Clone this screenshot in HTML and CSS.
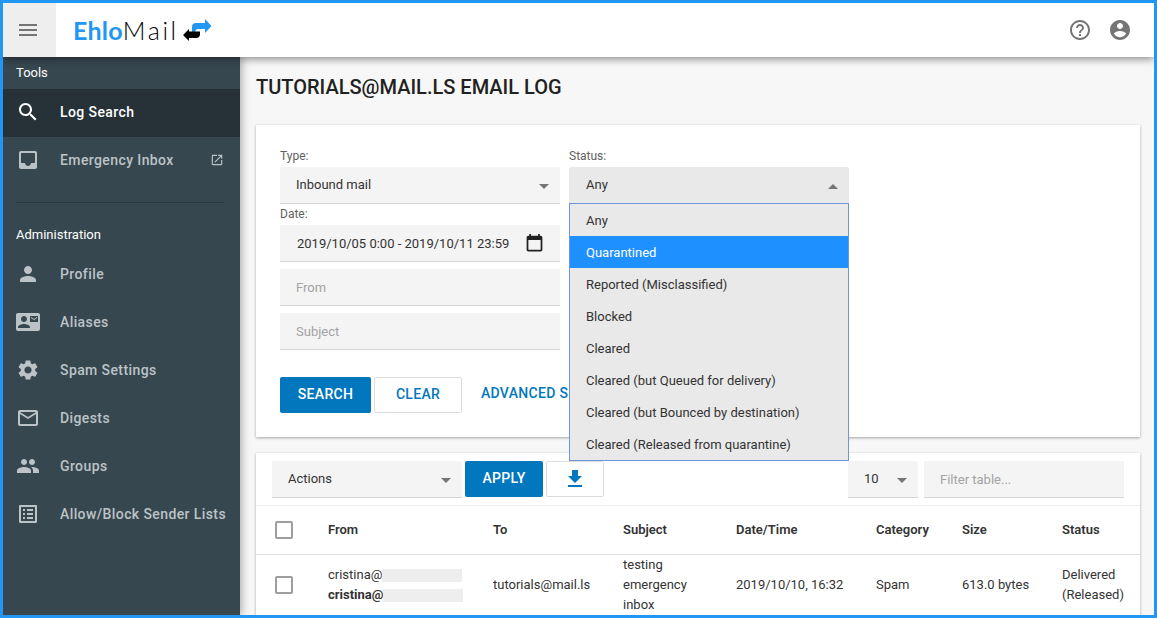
FILE: index.html
```html
<!DOCTYPE html>
<html lang="en">
<head>
  <meta charset="UTF-8" />
  <title>EhloMail - Email Log</title>
  <link rel="stylesheet" href="styles.css">
</head>
<body>
  <div class="frame">
    <header class="topbar">
      <button class="menu-btn" type="button" aria-label="Menu">
        <svg viewBox="0 0 24 24" class="icon"><path d="M3 18h18v-2H3v2zm0-5h18v-2H3v2zm0-7v2h18V6H3z"/></svg>
      </button>
      <div class="logo">
        <span class="logo-a">Ehlo</span><span class="logo-b">Mail</span>
        <svg viewBox="0 0 30 22" class="logo-arrows">
          <path fill="#2196f3" d="M10 15V8q0-4 4-4h9V0l6.500 7L23 14v-4h-7q-3 0-3 5z"/>
          <path fill="#000" d="M1 16l6-6v2.500h11V15q0 4-4 4H7v3z"/>
        </svg>
      </div>
      <div class="topbar-right">
        <svg viewBox="0 0 24 24" class="icon"><path d="M11 18h2v-2h-2v2zm1-16C6.48 2 2 6.48 2 12s4.48 10 10 10 10-4.48 10-10S17.52 2 12 2zm0 18c-4.41 0-8-3.59-8-8s3.59-8 8-8 8 3.59 8 8-3.59 8-8 8zm0-14c-2.21 0-4 1.79-4 4h2c0-1.1.9-2 2-2s2 .9 2 2c0 2-3 1.75-3 5h2c0-2.25 3-2.5 3-5 0-2.21-1.79-4-4-4z"/></svg>
        <svg viewBox="0 0 24 24" class="icon"><path d="M12 2C6.48 2 2 6.48 2 12s4.48 10 10 10 10-4.48 10-10S17.52 2 12 2zm0 3c1.66 0 3 1.34 3 3s-1.34 3-3 3-3-1.34-3-3 1.34-3 3-3zm0 14.2c-2.5 0-4.71-1.28-6-3.22.03-1.99 4-3.08 6-3.08 1.99 0 5.97 1.09 6 3.08-1.29 1.94-3.5 3.22-6 3.22z"/></svg>
      </div>
    </header>

    <div class="columns">
      <nav class="sidebar">
        <div class="nav-title tools">Tools</div>
        <a class="nav-item active">
          <svg viewBox="0 0 24 24" class="icon"><path d="M15.5 14h-.79l-.28-.27C15.41 12.59 16 11.11 16 9.5 16 5.91 13.09 3 9.5 3S3 5.91 3 9.5 5.91 16 9.5 16c1.61 0 3.09-.59 4.23-1.57l.27.28v.79l5 4.99L20.49 19l-4.99-5zm-6 0C7.01 14 5 11.99 5 9.5S7.01 5 9.5 5 14 7.01 14 9.5 11.99 14 9.5 14z"/></svg>
          Log Search
        </a>
        <a class="nav-item">
          <svg viewBox="0 0 24 24" class="icon"><path d="M19 3H4.99c-1.11 0-1.98.89-1.98 2L3 19c0 1.1.88 2 1.99 2H19c1.1 0 2-.9 2-2V5c0-1.11-.9-2-2-2zm0 12h-4c0 1.66-1.35 3-3 3s-3-1.34-3-3H4.99V5H19v10z"/></svg>
          Emergency Inbox
          <svg viewBox="0 0 24 24" class="icon small"><path d="M19 19H5V5h7V3H5c-1.11 0-2 .9-2 2v14c0 1.1.89 2 2 2h14c1.1 0 2-.9 2-2v-7h-2v7zM14 3v2h3.59l-9.83 9.83 1.41 1.41L19 6.41V10h2V3h-7z"/></svg>
        </a>
        <hr class="nav-rule">
        <div class="nav-title admin">Administration</div>
        <a class="nav-item">
          <svg viewBox="0 0 24 24" class="icon"><path d="M12 12c2.21 0 4-1.79 4-4s-1.79-4-4-4-4 1.79-4 4 1.79 4 4 4zm0 2c-2.67 0-8 1.34-8 4v2h16v-2c0-2.66-5.33-4-8-4z"/></svg>
          Profile
        </a>
        <a class="nav-item">
          <svg viewBox="0 0 24 24" class="icon"><path d="M21 8V7l-3 2-3-2v1l3 2 3-2zm1-5H2C.9 3 0 3.9 0 5v14c0 1.1.9 2 2 2h20c1.1 0 1.99-.9 1.99-2L24 5c0-1.1-.9-2-2-2zM8 6c1.66 0 3 1.34 3 3s-1.34 3-3 3-3-1.34-3-3 1.34-3 3-3zm6 12H2v-1c0-2 4-3.1 6-3.1s6 1.1 6 3.1v1zm8-6h-8V6h8v6z"/></svg>
          Aliases
        </a>
        <a class="nav-item">
          <svg viewBox="0 0 24 24" class="icon"><path d="M19.14 12.94c.04-.3.06-.61.06-.94 0-.32-.02-.64-.07-.94l2.03-1.58c.18-.14.23-.41.12-.61l-1.92-3.32c-.12-.22-.37-.29-.59-.22l-2.39.96c-.5-.38-1.03-.7-1.62-.94l-.36-2.54c-.04-.24-.24-.41-.48-.41h-3.84c-.24 0-.43.17-.47.41l-.36 2.54c-.59.24-1.13.57-1.62.94l-2.39-.96c-.22-.08-.47 0-.59.22L2.74 8.87c-.12.21-.08.47.12.61l2.03 1.58c-.05.3-.09.63-.09.94s.02.64.07.94l-2.03 1.58c-.18.14-.23.41-.12.61l1.92 3.32c.12.22.37.29.59.22l2.39-.96c.5.38 1.03.7 1.62.94l.36 2.54c.05.24.24.41.48.41h3.84c.24 0 .44-.17.47-.41l.36-2.54c.59-.24 1.13-.56 1.62-.94l2.39.96c.22.08.47 0 .59-.22l1.92-3.32c.12-.22.07-.47-.12-.61l-2.01-1.58zM12 15.6c-1.98 0-3.6-1.62-3.6-3.6s1.62-3.6 3.6-3.6 3.6 1.62 3.6 3.6-1.62 3.6-3.6 3.6z"/></svg>
          Spam Settings
        </a>
        <a class="nav-item">
          <svg viewBox="0 0 24 24" class="icon"><path d="M20 4H4c-1.1 0-1.99.9-1.99 2L2 18c0 1.1.9 2 2 2h16c1.1 0 2-.9 2-2V6c0-1.1-.9-2-2-2zm0 14H4V8l8 5 8-5v10zm-8-7L4 6h16l-8 5z"/></svg>
          Digests
        </a>
        <a class="nav-item">
          <svg viewBox="0 0 24 24" class="icon"><path d="M16 11c1.66 0 2.99-1.34 2.99-3S17.66 5 16 5c-1.66 0-3 1.34-3 3s1.34 3 3 3zm-8 0c1.66 0 2.99-1.34 2.99-3S9.66 5 8 5C6.34 5 5 6.34 5 8s1.34 3 3 3zm0 2c-2.33 0-7 1.17-7 3.5V19h14v-2.5c0-2.33-4.67-3.5-7-3.5zm8 0c-.29 0-.62.02-.97.05 1.16.84 1.97 1.97 1.97 3.45V19h6v-2.5c0-2.33-4.67-3.5-7-3.5z"/></svg>
          Groups
        </a>
        <a class="nav-item">
          <svg viewBox="0 0 24 24" class="icon"><path d="M19 5v14H5V5h14m1.1-2H3.9c-.5 0-.9.4-.9.9v16.2c0 .4.4.9.9.9h16.2c.4 0 .9-.5.9-.9V3.9c0-.5-.5-.9-.9-.9zM11 7h6v2h-6V7zm0 4h6v2h-6v-2zm0 4h6v2h-6zM7 7h2v2H7zm0 4h2v2H7zm0 4h2v2H7z"/></svg>
          Allow/Block Sender Lists
        </a>
      </nav>

      <main class="content">
        <h1 class="page-title">TUTORIALS@MAIL.LS EMAIL LOG</h1>

        <section class="card search-card">
          <div class="filters">
            <div class="filter-col">
              <label class="field-label">Type:</label>
              <div class="select">Inbound mail<span class="caret"></span></div>
              <label class="field-label date-label">Date:</label>
              <div class="select date">2019/10/05 0:00 - 2019/10/11 23:59
                <svg viewBox="0 0 24 24" class="icon cal"><path d="M19 3h-1V1h-2v2H8V1H6v2H5c-1.11 0-2 .9-2 2v14c0 1.1.89 2 2 2h14c1.1 0 2-.9 2-2V5c0-1.1-.9-2-2-2zm0 16H5V8h14v11z"/></svg>
              </div>
              <div class="select placeholder spaced">From</div>
              <div class="select placeholder spaced">Subject</div>
            </div>
            <div class="filter-col status-col">
              <label class="field-label">Status:</label>
              <div class="select open">Any<span class="caret up"></span></div>
              <ul class="dropdown">
                <li>Any</li>
                <li class="selected">Quarantined</li>
                <li>Reported (Misclassified)</li>
                <li>Blocked</li>
                <li>Cleared</li>
                <li>Cleared (but Queued for delivery)</li>
                <li>Cleared (but Bounced by destination)</li>
                <li>Cleared (Released from quarantine)</li>
              </ul>
            </div>
          </div>
          <div class="form-actions">
            <button class="btn primary" type="button">Search</button>
            <button class="btn outline" type="button">Clear</button>
            <a class="btn-link">Advanced Search</a>
          </div>
        </section>

        <section class="card table-card">
          <div class="table-tools">
            <div class="select actions">Actions<span class="caret"></span></div>
            <button class="btn primary apply" type="button">Apply</button>
            <button class="btn outline download" type="button" aria-label="Download">
              <svg viewBox="0 0 24 24" class="icon"><path d="M19 9h-4V3H9v6H5l7 7 7-7zM5 18v2h14v-2H5z"/></svg>
            </button>
            <div class="select page-size">10<span class="caret"></span></div>
            <div class="select placeholder filter">Filter table...</div>
          </div>
          <table class="log-table">
            <colgroup>
              <col class="c-check"><col class="c-from"><col class="c-to"><col class="c-subject">
              <col class="c-date"><col class="c-cat"><col class="c-size"><col class="c-status">
            </colgroup>
            <thead>
              <tr>
                <th><span class="checkbox"></span></th>
                <th>From</th><th>To</th><th>Subject</th><th>Date/Time</th><th>Category</th><th>Size</th><th>Status</th>
              </tr>
            </thead>
            <tbody>
              <tr>
                <td><span class="checkbox"></span></td>
                <td>
                  <div class="from-line">cristina@<span class="redact"></span></div>
                  <div class="from-line"><b>cristina@</b><span class="redact"></span></div>
                </td>
                <td>tutorials@mail.ls</td>
                <td class="subject-cell">testing emergency inbox</td>
                <td>2019/10/10, 16:32</td>
                <td>Spam</td>
                <td>613.0 bytes</td>
                <td>Delivered (Released)</td>
              </tr>
            </tbody>
          </table>
        </section>
      </main>
    </div>
  </div>
</body>
</html>
```

FILE: styles.css
```css
* {
  box-sizing: border-box;
}
html, body {
  height: 100%;
}
body {
  margin: 0;
  font-family: Roboto, "Liberation Sans", sans-serif;
  font-size: 13px;
  color: #333;
  overflow: hidden;
}
.frame {
  height: 100vh;
  border: 3px solid #2196f3;
  display: flex;
  flex-direction: column;
  overflow: hidden;
  background: #f7f7f7;
}
.icon {
  width: 24px;
  height: 24px;
  fill: currentColor;
  flex: none;
}

/* top bar */
.topbar {
  height: 54px;
  flex: none;
  display: flex;
  align-items: center;
  background: #fff;
  position: relative;
  z-index: 2;
  box-shadow: 0 2px 8px rgba(0, 0, 0, 0.45);
}
.menu-btn {
  width: 53px;
  height: 54px;
  border: none;
  padding: 0 3px 1px 0;
  background: #eee;
  color: #757575;
  display: flex;
  align-items: center;
  justify-content: center;
}
.logo {
  display: flex;
  align-items: center;
  margin-left: 17px;
  font-family: Lato, sans-serif;
  font-size: 25px;
  line-height: 1;
}
.logo-a {
  color: #2196f3;
  font-weight: 700;
  letter-spacing: 0.2px;
}
.logo-b {
  color: #000;
  font-weight: 300;
  letter-spacing: 2.6px;
}
.logo-arrows {
  width: 30px;
  height: 22px;
  margin-left: 3px;
}
.topbar-right {
  margin-left: auto;
  margin-right: 22px;
  display: flex;
  gap: 16px;
  color: #757575;
}

.columns {
  flex: 1;
  display: flex;
  min-height: 0;
}

/* sidebar */
.sidebar {
  width: 237px;
  flex: none;
  background: #37474f;
  color: #bcc3c7;
  position: relative;
  z-index: 1;
  box-shadow: 2px 0 8px rgba(0, 0, 0, 0.3);
}
.nav-title {
  color: #fff;
  font-size: 13px;
  padding-left: 13px;
}
.tools {
  height: 32px;
  line-height: 31px;
}
.admin {
  height: 28px;
  line-height: 24px;
}
.nav-item {
  height: 48px;
  display: flex;
  align-items: center;
  padding: 0 0 2px 13px;
  gap: 20px;
  font-size: 14px;
  font-weight: 500;
  letter-spacing: 0.4px;
}
.nav-item.active {
  background: #263238;
  color: #fff;
}
.nav-item .small {
  width: 14px;
  height: 14px;
  margin-left: auto;
  margin-right: 16px;
}
.nav-rule {
  border: none;
  border-top: 1px solid #2b383e;
  margin: 17px 16px 20px 13px;
}

/* main */
.content {
  flex: 1;
  min-width: 0;
  padding: 0 14px 0 16px;
}
.page-title {
  margin: 0;
  padding-top: 18px;
  height: 68px;
  font-size: 20px;
  line-height: 24px;
  font-weight: 500;
  color: #212121;
}
.card {
  background: #fff;
  box-shadow: 0 1px 3px rgba(0, 0, 0, 0.35);
  border-radius: 1px;
}
.search-card {
  height: 312px;
  padding: 24px;
}
.filters {
  display: flex;
  gap: 9px;
}
.filter-col {
  width: 280px;
}
.status-col {
  position: relative;
}
.field-label {
  display: block;
  height: 18px;
  line-height: 14px;
  font-size: 12px;
  color: #616161;
}
.date-label {
  height: 21px;
  line-height: 20px;
}
.select {
  height: 37px;
  display: flex;
  align-items: center;
  padding: 0 11px 2px 16px;
  background: #f4f4f4;
  border-bottom: 1px solid #d6d6d6;
  border-radius: 2px 2px 0 0;
  color: #333;
  position: relative;
}
.select.open {
  background: #e9e9e9;
  border-bottom: none;
  padding-left: 17px;
}
.select.placeholder {
  color: #a3a3a3;
  padding-bottom: 0;
}
.select.spaced {
  margin-top: 7px;
}
.select.date {
  justify-content: space-between;
  padding-left: 17px;
  padding-bottom: 0;
}
.caret {
  margin-left: auto;
  width: 0;
  height: 0;
  border-left: 5px solid transparent;
  border-right: 5px solid transparent;
  border-top: 5px solid #757575;
  margin-top: 4px;
}
.caret.up {
  border-top: none;
  border-bottom: 5px solid #757575;
}
.cal {
  width: 21px;
  height: 21px;
  color: #212121;
  margin-right: 4px;
}
.dropdown {
  position: absolute;
  top: 54px;
  left: 0;
  right: 0;
  z-index: 3;
  margin: 0;
  padding: 0;
  list-style: none;
  background: #e9e9e9;
  border: 1px solid #6f96d8;
}
.dropdown li {
  height: 32px;
  line-height: 34px;
  padding-left: 16px;
}
.dropdown li.selected {
  background: #1e90ff;
  color: #fff;
}
.form-actions {
  margin-top: 27px;
  display: flex;
  align-items: center;
}
.btn {
  height: 36px;
  padding: 0 0 2px;
  font-family: inherit;
  font-size: 14px;
  font-weight: 500;
  text-transform: uppercase;
  letter-spacing: 0.3px;
  border-radius: 2px;
  cursor: pointer;
}
.btn.primary {
  background: #0277bd;
  color: #fff;
  border: none;
  width: 91px;
}
.btn.outline {
  background: #fff;
  color: #0277bd;
  border: 1px solid #ddd;
  width: 88px;
  margin-left: 3px;
}
.btn-link {
  margin-left: 19px;
  font-size: 14px;
  font-weight: 500;
  letter-spacing: 0.3px;
  text-transform: uppercase;
  color: #0277bd;
  white-space: nowrap;
  margin-top: -4px;
}

/* table card */
.table-card {
  margin-top: 16px;
}
.table-tools {
  height: 53px;
  padding: 8px 16px 0;
  display: flex;
  align-items: flex-start;
  border-bottom: 1px solid #eee;
}
.select.actions {
  width: 190px;
}
.btn.primary.apply {
  width: 78px;
  margin-left: 3px;
}
.btn.outline.download {
  width: 58px;
  padding: 0;
  display: flex;
  align-items: center;
  justify-content: center;
}
.select.page-size {
  width: 70px;
  margin-left: auto;
}
.select.filter {
  width: 200px;
  margin-left: 6px;
}
.log-table {
  width: 100%;
  border-collapse: collapse;
  table-layout: fixed;
}
.c-check { width: 72px; }
.c-from { width: 165px; }
.c-to { width: 130px; }
.c-subject { width: 113px; }
.c-date { width: 140px; }
.c-cat { width: 86px; }
.c-size { width: 100px; }
.log-table th, .log-table td {
  text-align: left;
  padding: 0;
  vertical-align: middle;
  line-height: 20px;
}
.log-table th {
  height: 48px;
  font-weight: 600;
  border-bottom: 1px solid #e0e0e0;
}
.log-table th:first-child, .log-table td:first-child {
  padding-left: 19px;
}
.log-table td {
  height: 62px;
  padding-right: 12px;
}
.log-table td.subject-cell {
  padding-right: 30px;
}
.checkbox {
  display: block;
  width: 18px;
  height: 18px;
  border: 2px solid #9e9e9e;
  border-radius: 2px;
  background: #fff;
}
.from-line {
  display: flex;
  align-items: center;
  height: 20px;
}
.redact {
  width: 80px;
  height: 13px;
  background: #eee;
}
```
